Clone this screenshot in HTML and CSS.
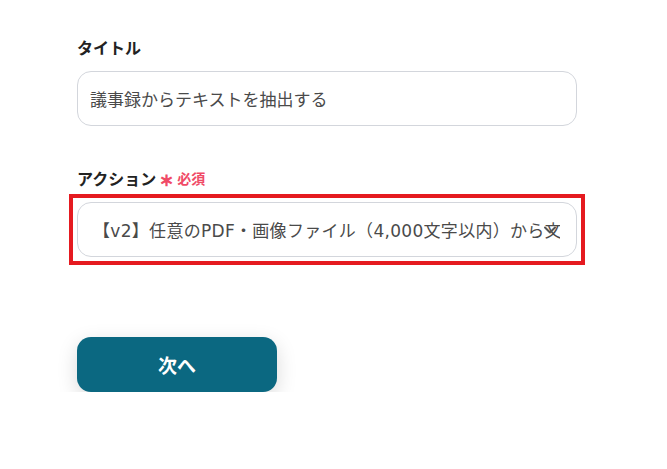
FILE: index.html
```html
<!DOCTYPE html>
<html lang="ja">
<head>
<meta charset="utf-8">
<title>フォーム</title>
<link rel="stylesheet" href="styles.css">
</head>
<body>
<main class="page">
  <div class="field">
    <div class="label">タイトル</div>
    <div class="input">
      <span class="input-text">議事録からテキストを抽出する</span>
    </div>
  </div>
  <div class="field field-action">
    <div class="label">アクション<span class="required"><span class="star">∗</span>必須</span></div>
    <div class="select-wrap">
      <div class="input select">
        <span class="input-text select-text">【v2】任意のPDF・画像ファイル（4,000文字以内）から文字情報を抽出する</span>
      </div>
      <svg class="chevron" width="14" height="10" viewBox="0 0 14 10"><path d="M2 2.5 L7 7.5 L12 2.5" fill="none" stroke="#555" stroke-width="2" stroke-linecap="round" stroke-linejoin="round"/></svg>
      <div class="highlight"></div>
    </div>
  </div>
  <button class="next">次へ</button>
</main>
</body>
</html>
```
FILE: styles.css
```css
* { box-sizing: border-box; }
html, body { margin: 0; padding: 0; background: #fff; }
body {
  font-family: "Noto Sans CJK JP", "Noto Sans", sans-serif;
  color: #222;
}
.page {
  padding: 35px 0 0 77px;
  width: 577px;
  display: flex;
  flex-direction: column;
}
.field { display: flex; flex-direction: column; }
.field-action { margin-top: 40px; }
.label {
  font-size: 16px;
  font-weight: 700;
  line-height: 24px;
  margin-bottom: 12px;
  color: #222;
  display: flex;
  align-items: center;
}
.required {
  color: #f04a66;
  font-size: 14px;
  font-weight: 700;
  margin-left: 3px;
  display: inline-flex;
  align-items: center;
}
.star { font-size: 18px; margin-right: 3px; line-height: 1; }
.input {
  height: 55px;
  border: 1px solid #d3d6dc;
  border-radius: 14px;
  background: #fff;
  display: flex;
  align-items: center;
  padding: 0 16px 0 12px;
  overflow: hidden;
}
.select { padding-left: 15px; }
.input-text {
  font-family: "Noto Sans CJK JP", "Noto Sans", sans-serif;
  font-size: 17px;
  color: #4a4a4a;
  white-space: nowrap;
  overflow: hidden;
}
.select-text {
  font-family: "DejaVu Sans", "Noto Sans CJK JP", sans-serif;
  letter-spacing: 0.3px;
}
.select-wrap { position: relative; }
.chevron {
  position: absolute;
  right: 20px;
  top: 23px;
}
.highlight {
  position: absolute;
  inset: -8px;
  border: 4px solid #e51a20;
  pointer-events: none;
}
.next {
  margin-top: 80px;
  width: 200px;
  height: 55px;
  border: none;
  border-radius: 14px;
  background: #0b6881;
  color: #fff;
  font-family: "Noto Sans CJK JP", "Noto Sans", sans-serif;
  font-size: 19px;
  font-weight: 700;
  box-shadow: 0 6px 20px rgba(0, 0, 0, 0.15);
  cursor: pointer;
}
```
